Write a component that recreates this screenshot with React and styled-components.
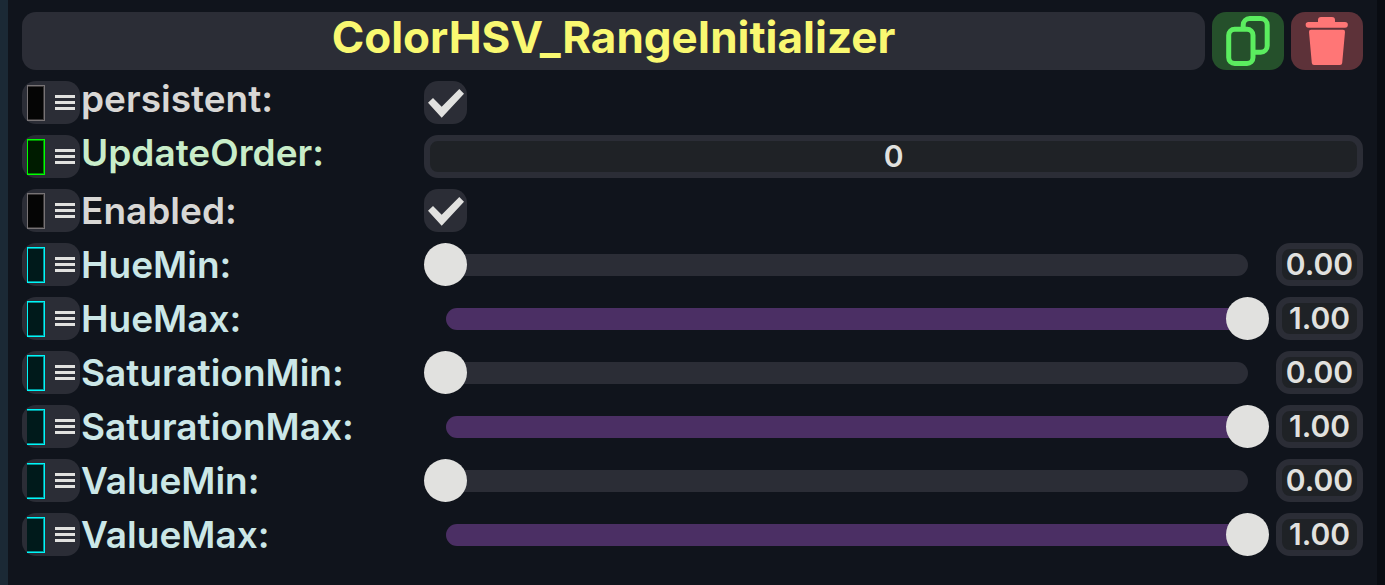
import React, { useState } from "react";
import styled, { createGlobalStyle } from "styled-components";

const color = {
  page: "#10141c",
  surface: "#2b2d36",
  field: "#1f2226",
  light: "#e1e1df",
  purple: "#4b2f64",
};

const tones = {
  grey: { text: "#d8d7d5", edge: "#777375", inner: "#383536", fill: "#050505" },
  green: { text: "#c9edc9", edge: "#00ff00", inner: "#009000", fill: "#001c00" },
  cyan: { text: "#cbe7e7", edge: "#00f6f8", inner: "#009698", fill: "#001a1b" },
};

const GlobalStyle = createGlobalStyle`
  *, *::before, *::after { box-sizing: border-box; }
  body {
    margin: 0;
    background: ${color.page};
    font-family: Inter, "Liberation Sans", sans-serif;
    font-weight: 600;
  }
`;

const Panel = styled.main`
  display: flex;
  flex-direction: column;
  gap: 11px;
  min-height: 100vh;
  padding: 12px 14px;
  border-left: 8px solid #1b2935;
  border-right: 8px solid #090c12;
  background: ${color.page};
`;

const Header = styled.header`
  display: flex;
  gap: 7px;
  height: 58px;
`;

const Title = styled.h1`
  flex: 1;
  min-width: 0;
  margin: 0;
  padding-bottom: 8px;
  border-radius: 14px;
  background: ${color.surface};
  color: #f9f871;
  font-size: 44px;
  font-weight: 700;
  line-height: 50px;
  text-align: center;
  white-space: nowrap;
`;

const HeaderButton = styled.button`
  width: 72px;
  height: 58px;
  padding: 0;
  border: 0;
  border-radius: 14px;
  background: ${(p) => p.$background};
  color: ${(p) => p.$color};
  cursor: pointer;

  svg { display: block; }
`;

const Row = styled.div`
  display: grid;
  grid-template-columns: minmax(0, 3fr) minmax(0, 7fr);
  height: 43px;
`;

const Name = styled.div`
  display: flex;
  gap: 1px;
`;

const MemberButton = styled.button`
  display: flex;
  align-items: center;
  gap: 10px;
  flex: none;
  width: 58px;
  height: 43px;
  padding: 0 5px;
  border: 0;
  border-radius: 14px;
  background: ${color.surface};
  cursor: pointer;
`;

const Swatch = styled.span`
  width: 18px;
  height: 36px;
  border: 1px solid ${(p) => p.$tone.edge};
  border-left-width: ${(p) => (p.$openLeft ? "0" : "1px")};
  box-shadow: inset -1px 0 ${(p) => p.$tone.inner}, inset 0 1px ${(p) => p.$tone.inner},
    inset 0 -1px ${(p) => p.$tone.inner};
  background: ${(p) => p.$tone.fill};
`;

const Bars = styled.span`
  display: flex;
  flex-direction: column;
  gap: 3px;
  width: 20px;

  i {
    height: 3px;
    background: ${color.light};
  }
`;

const Label = styled.label`
  padding-bottom: ${(p) => (p.$descends ? "8px" : "0")};
  align-self: center;
  color: ${(p) => p.$tone.text};
  font-size: 37px;
  line-height: 34px;
  white-space: nowrap;
`;

const Tick = styled.span`
  display: grid;
  width: 43px;
  height: 43px;

  input, svg { grid-area: 1 / 1; }
  svg { pointer-events: none; }
  input:not(:checked) + svg { visibility: hidden; }
`;

const TickInput = styled.input`
  appearance: none;
  width: 43px;
  height: 43px;
  margin: 0;
  border-radius: 14px;
  background: ${color.surface};
`;

const Field = styled.input`
  width: ${(p) => (p.$compact ? "87px" : "100%")};
  height: 43px;
  padding: 0 0 2px;
  border: 6px solid ${color.surface};
  border-radius: 14px;
  background: ${color.field};
  color: ${color.light};
  font: inherit;
  font-size: 30px;
  text-align: center;
  outline: 0;
`;

const RangeRow = styled.div`
  display: flex;
  gap: 7px;
`;

const Slider = styled.div`
  display: grid;
  flex: 1;
  align-items: center;
  min-width: 0;
`;

const Track = styled.div`
  grid-area: 1 / 1;
  height: 22px;
  margin: 0 21px 0 22px;
  overflow: hidden;
  border-radius: 11px;
  background: ${color.surface};
`;

const Fill = styled.div`
  height: 100%;
  background: ${color.purple};
`;

const Range = styled.input`
  grid-area: 1 / 1;
  z-index: 1;
  appearance: none;
  width: 100%;
  height: 43px;
  margin: 0;
  background: transparent;

  &::-webkit-slider-thumb {
    appearance: none;
    width: 43px;
    height: 43px;
    border-radius: 50%;
    background: ${color.light};
  }
`;

function CopyIcon() {
  return (
    <svg width="72" height="58" viewBox="0 0 72 58" fill="none" stroke="currentColor" strokeWidth="5" aria-hidden="true">
      <rect x="16.7" y="17.3" width="24.3" height="34.2" rx="6" />
      <path d="M31.2 17V13a6.5 6.5 0 0 1 6.5-6.5h11a6.5 6.5 0 0 1 6.5 6.5v20.7a6.5 6.5 0 0 1-6.5 6.5H42" />
    </svg>
  );
}

function TrashIcon() {
  return (
    <svg width="72" height="58" viewBox="0 0 72 58" fill="currentColor" aria-hidden="true">
      <path d="M17.5 10H27V8q0-3 3-3h11q3 0 3 3v2h10a2.7 2.7 0 0 1 0 5.7H17.5a2.8 2.8 0 0 1 0-5.7Z" />
      <path d="M20 17.7h32q2.2 0 2 2.2L51.2 51q-.2 2-2.2 2H23q-2 0-2.2-2L18 19.9q-.2-2.2 2-2.2Z" />
    </svg>
  );
}

function Checkbox({ id }) {
  return (
    <Tick>
      <TickInput id={id} type="checkbox" defaultChecked />
      <svg width="43" height="43" viewBox="0 0 43 43" fill={color.light} aria-hidden="true">
        <path d="M4 21.7 9 17l8.7 8.7L35.3 8l4.7 4.7-22.3 24Z" />
      </svg>
    </Tick>
  );
}

function RangeField({ id, name, initial }) {
  const [value, setValue] = useState(initial);
  return (
    <RangeRow>
      <Slider>
        <Track>
          <Fill style={{ width: `${value * 100}%` }} />
        </Track>
        <Range
          id={id}
          type="range"
          min="0"
          max="1"
          step="0.01"
          value={value}
          onChange={(e) => setValue(Number(e.target.value))}
        />
      </Slider>
      <Field $compact readOnly aria-label={`${name} value`} value={value.toFixed(2)} />
    </RangeRow>
  );
}

const members = [
  { name: "persistent", tone: "grey", kind: "check", descends: true },
  { name: "UpdateOrder", tone: "green", kind: "text", descends: true },
  { name: "Enabled", tone: "grey", kind: "check" },
  { name: "HueMin", tone: "cyan", kind: "range", value: 0 },
  { name: "HueMax", tone: "cyan", kind: "range", value: 1 },
  { name: "SaturationMin", tone: "cyan", kind: "range", value: 0 },
  { name: "SaturationMax", tone: "cyan", kind: "range", value: 1, openLeft: true },
  { name: "ValueMin", tone: "cyan", kind: "range", value: 0, openLeft: true },
  { name: "ValueMax", tone: "cyan", kind: "range", value: 1, openLeft: true },
];

function Member({ name, tone, kind, value, descends, openLeft }) {
  return (
    <Row>
      <Name>
        <MemberButton type="button" aria-label={`${name} options`}>
          <Swatch $tone={tones[tone]} $openLeft={openLeft} />
          <Bars><i /><i /><i /></Bars>
        </MemberButton>
        <Label htmlFor={name} $tone={tones[tone]} $descends={descends}>{name}:</Label>
      </Name>
      {kind === "check" && <Checkbox id={name} />}
      {kind === "text" && <Field id={name} type="text" defaultValue="0" />}
      {kind === "range" && <RangeField id={name} name={name} initial={value} />}
    </Row>
  );
}

export default function App() {
  return (
    <>
      <GlobalStyle />
      <Panel>
        <Header>
          <Title>ColorHSV_RangeInitializer</Title>
          <HeaderButton type="button" aria-label="Duplicate" $background="#25502b" $color="#5bed5f">
            <CopyIcon />
          </HeaderButton>
          <HeaderButton type="button" aria-label="Delete" $background="#5d3239" $color="#ff7676">
            <TrashIcon />
          </HeaderButton>
        </Header>
        {members.map((m) => <Member key={m.name} {...m} />)}
      </Panel>
    </>
  );
}
